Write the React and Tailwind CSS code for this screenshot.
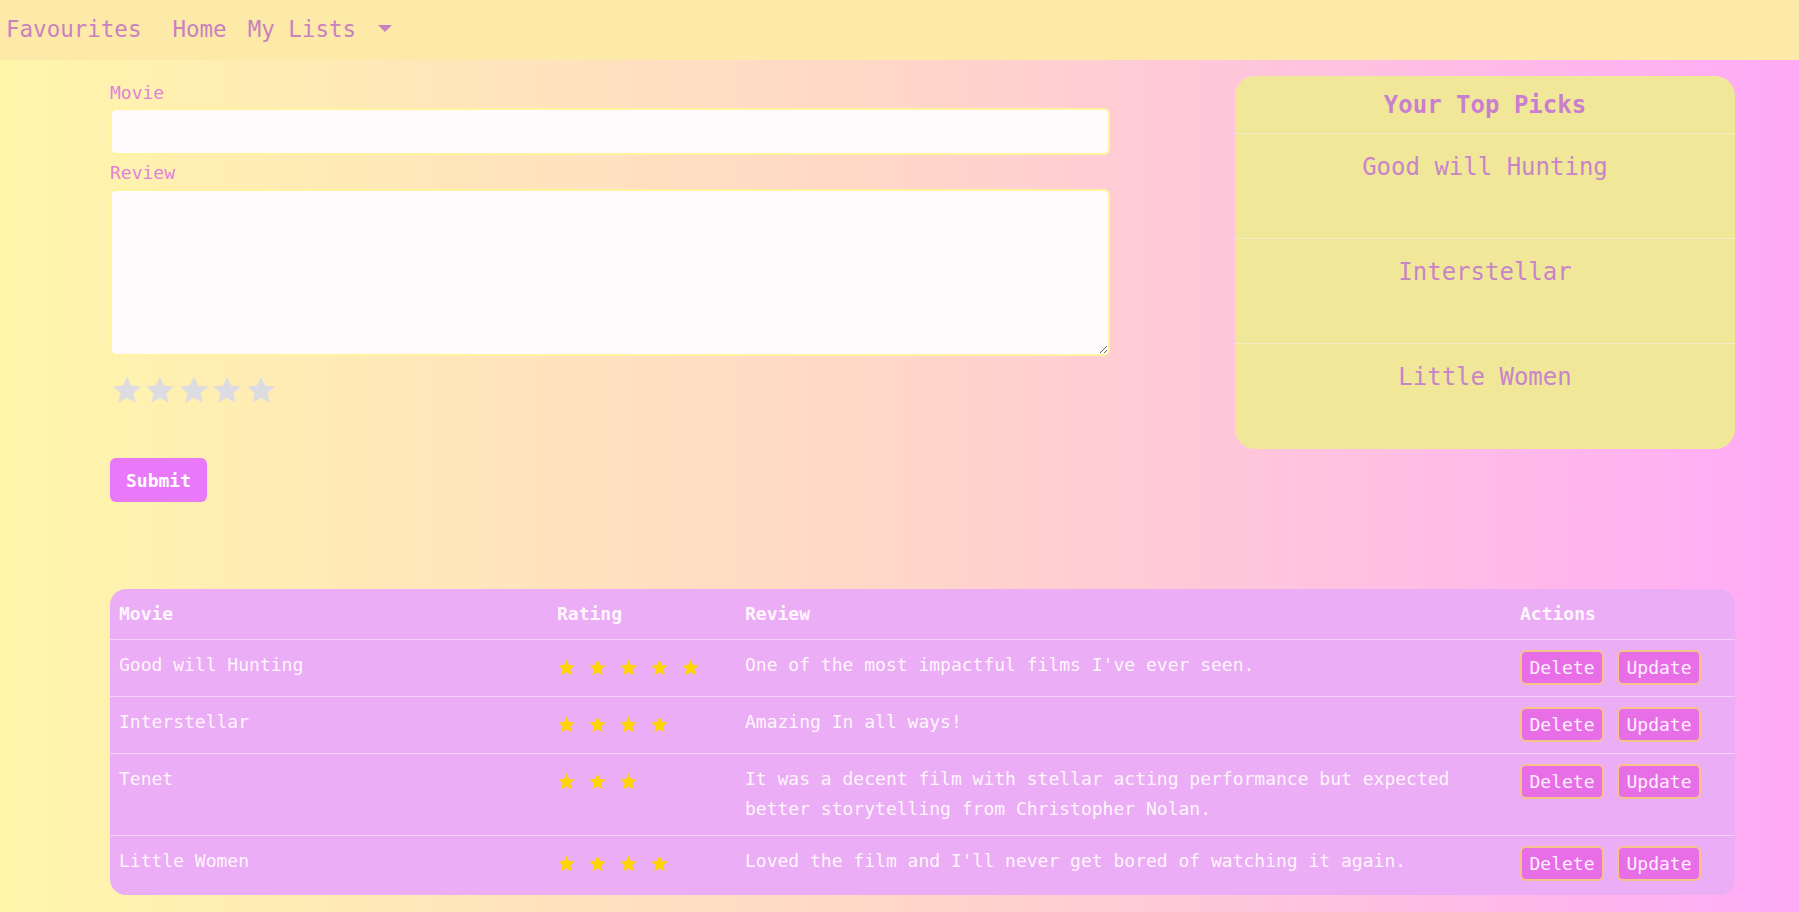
import { useState } from 'react';

const font = { fontFamily: '"DejaVu Sans Mono", "Liberation Mono", monospace' };

const movies = [
  { title: 'Good will Hunting', rating: 5, review: "One of the most impactful films I've ever seen." },
  { title: 'Interstellar', rating: 4, review: 'Amazing In all ways!' },
  { title: 'Tenet', rating: 3, review: 'It was a decent film with stellar acting performance but expected better storytelling from Christopher Nolan.' },
  { title: 'Little Women', rating: 4, review: "Loved the film and I'll never get bored of watching it again." },
];

const picks = ['Good will Hunting', 'Interstellar', 'Little Women'];

function Star({ className }) {
  return (
    <svg viewBox="0 0 24 24" className={className} fill="currentColor">
      <path d="M12 1.8l3.05 6.9 7.45.7-5.65 4.95 1.7 7.35L12 17.85 5.45 21.7l1.7-7.35L1.5 9.4l7.45-.7z" />
    </svg>
  );
}

function Nav() {
  return (
    <nav className="h-[60px] bg-[#fde9a8] flex items-center pl-[6px] text-[22.5px] text-[#c882bf]">
      <a className="mr-[31px]">Favourites</a>
      <a className="mr-[21px]">Home</a>
      <a className="flex items-center">
        My Lists
        <span className="ml-[22px] mb-[4px] w-0 h-0 border-l-[7px] border-r-[7px] border-t-[7px] border-l-transparent border-r-transparent border-t-[#c882bf]" />
      </a>
    </nav>
  );
}

function ReviewForm() {
  const [movie, setMovie] = useState('');
  const [review, setReview] = useState('');
  return (
    <form className="w-[1000px] pt-[3px]" onSubmit={(e) => e.preventDefault()}>
      <label className="block text-[18px] leading-[27px] text-[#e283d9]">Movie</label>
      <input
        value={movie}
        onChange={(e) => setMovie(e.target.value)}
        className="mt-[2px] block w-full h-[47px] rounded-md border-2 border-[#fff3a0] bg-[#fffafc] px-3 text-[18px] outline-none"
      />
      <label className="mt-[4px] block text-[18px] leading-[27px] text-[#e283d9]">Review</label>
      <textarea
        value={review}
        onChange={(e) => setReview(e.target.value)}
        className="mt-[3px] block w-full h-[167px] rounded-md border-2 border-[#fff3a0] bg-[#fffafc] px-3 py-2 text-[18px] outline-none"
      />
      <div className="mt-[17px] flex h-[34px] items-center">
        {[0, 1, 2, 3, 4].map((i) => (
          <span key={i} className="w-[33.5px] flex justify-center">
            <Star className="w-[32px] h-[32px] text-[#dcdce2]" />
          </span>
        ))}
      </div>
      <button
        type="submit"
        className="mt-[51px] h-[44px] w-[97px] rounded-md bg-[#e879f9] text-[18px] font-bold text-white"
      >
        Submit
      </button>
    </form>
  );
}

function TopPicks() {
  return (
    <div className="ml-auto w-[500px] rounded-[20px] bg-[#f0e898] text-[24px] text-[#c884c9] text-center">
      <div className="h-[58px] flex items-center justify-center font-bold text-[#c97fcf] border-b border-[#f2edc4]">
        Your Top Picks
      </div>
      {picks.map((p, i) => (
        <div
          key={p}
          className={`h-[105px] pt-[15px] leading-[36px] ${i < picks.length - 1 ? 'border-b border-[#f2edc4]' : ''}`}
        >
          {p}
        </div>
      ))}
    </div>
  );
}

function MovieTable() {
  return (
    <div className="mt-[87px] rounded-[16px] overflow-hidden bg-[#ebadf6] text-[#fff6fd] text-[18px] leading-[30px]">
      <table className="w-full border-collapse table-fixed">
        <colgroup>
          <col className="w-[438px]" />
          <col className="w-[188px]" />
          <col />
          <col className="w-[224px]" />
        </colgroup>
        <thead>
          <tr className="border-b border-[#f5d2f7]">
            <th className="text-left font-bold pl-[9px] py-[10px]">Movie</th>
            <th className="text-left font-bold pl-[9px] py-[10px]">Rating</th>
            <th className="text-left font-bold pl-[9px] py-[10px]">Review</th>
            <th className="text-left font-bold pl-[9px] py-[10px]">Actions</th>
          </tr>
        </thead>
        <tbody>
          {movies.map((m, idx) => {
            const last = idx === movies.length - 1;
            const cell = `align-top pt-[10px] ${last ? 'pb-[14px]' : 'pb-[11px]'}`;
            return (
              <tr key={m.title} className={last ? '' : 'border-b border-[#f5d2f7]'}>
                <td className={`${cell} pl-[9px]`}>{m.title}</td>
                <td className={`${cell} pl-[3px]`}>
                  <div className="flex h-[35px] items-center">
                    {Array.from({ length: m.rating }).map((_, i) => (
                      <span key={i} className="w-[31px] flex justify-center">
                        <Star className="w-[19px] h-[19px] text-[#ffd500]" />
                      </span>
                    ))}
                  </div>
                </td>
                <td className={`${cell} pl-[9px] pr-[40px]`}>{m.review}</td>
                <td className={`${cell} pl-[9px]`}>
                  <div className="flex gap-[13px]">
                    <button className="h-[35px] w-[84px] rounded-md border-2 border-[#f5c28a] bg-[#e86ee8] text-[#fff0ff] leading-none">
                      Delete
                    </button>
                    <button className="h-[35px] w-[84px] rounded-md border-2 border-[#f5c28a] bg-[#e86ee8] text-[#fff0ff] leading-none">
                      Update
                    </button>
                  </div>
                </td>
              </tr>
            );
          })}
        </tbody>
      </table>
    </div>
  );
}

export default function App() {
  return (
    <div style={font} className="min-h-screen bg-gradient-to-r from-[#fff6aa] via-[#ffd6c8] to-[#ffaaf7]">
      <Nav />
      <main className="pl-[110px] pr-[64px] pt-4 pb-[18px]">
        <div className="flex items-start">
          <ReviewForm />
          <TopPicks />
        </div>
        <MovieTable />
      </main>
    </div>
  );
}
